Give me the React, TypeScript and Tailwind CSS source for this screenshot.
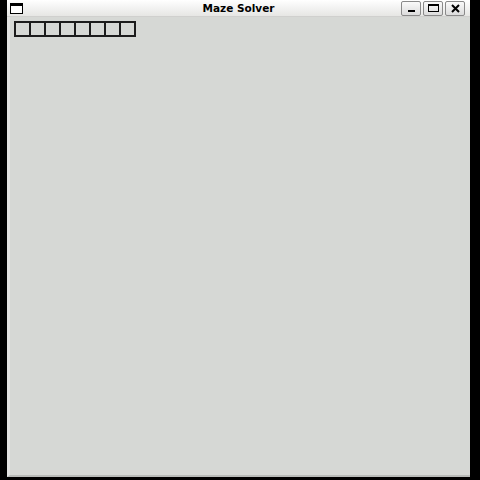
const cells = [0, 1, 2, 3, 4, 5, 6, 7]

function WinButton({ children }: { children: React.ReactNode }) {
  return (
    <div className="w-[20px] h-[15px] rounded-[2px] border border-[#8a8a8a] bg-gradient-to-b from-[#fafafa] to-[#dcdcdc] flex items-center justify-center">
      {children}
    </div>
  )
}

export default function App() {
  return (
    <div className="w-[480px] h-[480px] bg-black flex overflow-hidden">
      <div className="ml-[7px] w-[463px] h-[477px] flex flex-col bg-[#d6d8d5]">
        {/* Title bar */}
        <div className="h-[17px] grid grid-cols-[1fr_auto_1fr] items-center bg-gradient-to-b from-white to-[#e6e6e4] border-b border-[#d0d0ce]">
          <div className="ml-[3px] w-[13px] h-[11px] border border-black border-t-[3px] bg-white" />
          <div className="text-center text-[10.5px] font-bold text-black leading-none font-['DejaVu_Sans',sans-serif]">
            Maze Solver
          </div>
          <div className="mr-[5px] flex gap-[2px] justify-end">
            <WinButton>
              <div className="w-[7px] h-[2px] bg-black mt-[6px]" />
            </WinButton>
            <WinButton>
              <div className="w-[11px] h-[8px] border border-black border-t-2" />
            </WinButton>
            <WinButton>
              <svg width="9" height="9" viewBox="0 0 9 9">
                <path d="M1 1L8 8M8 1L1 8" stroke="black" strokeWidth="2" />
              </svg>
            </WinButton>
          </div>
        </div>

        {/* Content */}
        <div className="flex-1 border-l-[3px] border-[#e2e3e1] border-b-2 border-b-[#b9bbb8] pt-[4px] pl-[4px]">
          <div className="flex">
            {cells.map((c) => (
              <div
                key={c}
                className={`w-[15px] h-[16px] border-l-2 border-t-2 border-b-2 border-[#1c1c1c] ${
                  c === 7 ? "border-r-2 w-[17px]" : ""
                }`}
              />
            ))}
          </div>
        </div>
      </div>
    </div>
  )
}
